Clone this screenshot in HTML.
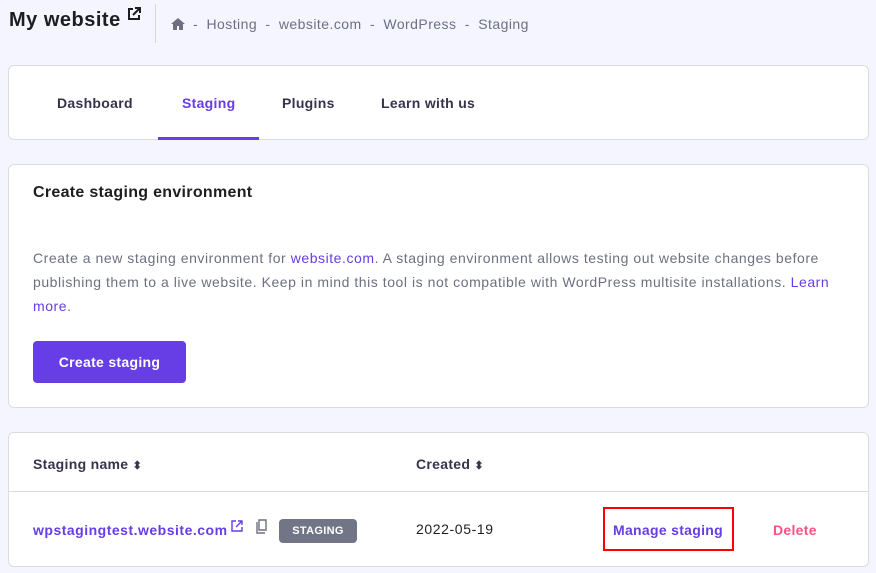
<!DOCTYPE html>
<html><head><style>
*{box-sizing:border-box;margin:0;padding:0}
body{width:876px;height:573px;background:#f4f5ff;font-family:"Liberation Sans",sans-serif;color:#2f1c6a;position:relative;overflow:hidden;letter-spacing:0.3px}
.abs{position:absolute}
.card{position:absolute;background:#fff;border:1px solid #dadce0;border-radius:6px;left:8px;width:861px}
a{color:#673de6;text-decoration:none}
</style></head><body>
<div class="abs" style="left:9px;top:9px;font-size:20px;font-weight:bold;color:#1d1e20;letter-spacing:0.5px">My website</div>
<svg class="abs" style="left:127px;top:7px" width="14" height="14" viewBox="0 0 14 14"><path d="M6 2H2v10h10V8" fill="none" stroke="#1d1e20" stroke-width="2"/><path d="M8 1h5v5M13 1L6 8" fill="none" stroke="#1d1e20" stroke-width="2"/></svg>
<div class="abs" style="left:155px;top:4px;width:1px;height:39px;background:#d5d6dc"></div>
<svg class="abs" style="left:170px;top:17px" width="16" height="14" viewBox="0 0 16 14"><path d="M8 1L1 7h2v6h4V9h2v4h4V7h2z" fill="#6d7081"/></svg>
<div class="abs" style="left:193px;top:16px;font-size:14px;color:#6d7081;word-spacing:4px;letter-spacing:0.45px">- Hosting - website.com - WordPress - Staging</div>

<div class="card" style="top:65px;height:75px">
<div class="abs" style="left:48px;top:29px;font-size:14px;font-weight:bold;color:#36344d">Dashboard</div>
<div class="abs" style="left:173px;top:29px;font-size:14px;font-weight:bold;color:#673de6">Staging</div>
<div class="abs" style="left:149px;top:71px;width:101px;height:3px;background:#673de6"></div>
<div class="abs" style="left:273px;top:29px;font-size:14px;font-weight:bold;color:#36344d">Plugins</div>
<div class="abs" style="left:372px;top:29px;font-size:14px;font-weight:bold;color:#36344d">Learn with us</div>
</div>

<div class="card" style="top:164px;height:244px">
<div class="abs" style="left:24px;top:19px;font-size:16px;font-weight:bold;color:#1d1e20">Create staging environment</div>
<div class="abs" style="left:24px;top:81px;width:810px;font-size:14px;line-height:24px;color:#6d7081;letter-spacing:0.55px">Create a new staging environment for <a>website.com</a>. A staging environment allows testing out website changes before publishing them to a live website. Keep in mind this tool is not compatible with WordPress multisite installations. <a>Learn more</a>.</div>
<div class="abs" style="left:24px;top:176px;width:153px;height:42px;background:#673de6;border-radius:4px;color:#fff;font-weight:bold;font-size:14px;text-align:center;line-height:42px">Create staging</div>
</div>

<div class="card" style="top:432px;height:135px">
<div class="abs" style="left:24px;top:23px;font-size:14px;font-weight:bold;color:#36344d">Staging name <span style="font-size:11px">⬍</span></div>
<div class="abs" style="left:407px;top:23px;font-size:14px;font-weight:bold;color:#36344d">Created <span style="font-size:11px">⬍</span></div>
<div class="abs" style="left:0;top:58px;width:859px;height:1px;background:#dadce0"></div>
<div class="abs" style="left:24px;top:89px;font-size:14px;font-weight:bold;color:#673de6;letter-spacing:0.5px">wpstagingtest.website.com</div>
<svg class="abs" style="left:222px;top:87px" width="12" height="12" viewBox="0 0 12 12"><path d="M5 1H1v10h10V7M7 1h4v4M11 1L5 7" fill="none" stroke="#673de6" stroke-width="1.4"/></svg>
<svg class="abs" style="left:247px;top:86px" width="12" height="15" viewBox="0 0 12 15"><path d="M1 3v11h8M3 1h7v10H3z" fill="none" stroke="#6d7081" stroke-width="1.4"/></svg>
<div class="abs" style="left:270px;top:86px;width:78px;height:24px;background:#727586;border-radius:4px;color:#fff;font-size:11px;font-weight:bold;text-align:center;line-height:24px">STAGING</div>
<div class="abs" style="left:407px;top:88px;font-size:14px;color:#1d1e20;letter-spacing:0.6px">2022-05-19</div>
<div class="abs" style="left:594px;top:74px;width:131px;height:44px;border:2px solid #f00"></div>
<div class="abs" style="left:604px;top:89px;font-size:14px;font-weight:bold;color:#673de6">Manage staging</div>
<div class="abs" style="left:764px;top:89px;font-size:14px;font-weight:bold;color:#fc5185">Delete</div>
</div>
</body></html>
